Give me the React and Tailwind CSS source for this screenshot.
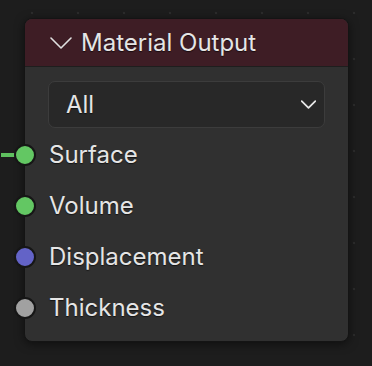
// Blender-style "Material Output" shader node
import React from 'react'

const sockets = [
  { name: 'Surface', color: 'bg-[#63c763]', linked: true },
  { name: 'Volume', color: 'bg-[#63c763]' },
  { name: 'Displacement', color: 'bg-[#6363c7]' },
  { name: 'Thickness', color: 'bg-[#a1a1a1]' },
]

function Chevron({ className, stroke = 1.6 }) {
  return (
    <svg viewBox="0 0 22 12" className={className} fill="none">
      <path d="M1 1 L11 11 L21 1" stroke="currentColor" strokeWidth={stroke} strokeLinecap="round" strokeLinejoin="round" />
    </svg>
  )
}

export default function App() {
  return (
    <div
      className="w-[372px] h-[366px] overflow-hidden bg-[#1d1d1d] bg-[radial-gradient(circle,#2c2c2c_1px,transparent_1.6px)] bg-[length:46px_46px] bg-[position:9px_-10px] pt-[18px] pl-[24px] text-[#e5e5e5]"
      style={{ fontFamily: 'Inter, "Noto Sans", sans-serif' }}
    >
      <div className="relative w-[325px] h-[324px] rounded-[8px] bg-[#303030] border border-[#141414] shadow-[0_2px_10px_rgba(0,0,0,0.5)]">
        {/* Header */}
        <div className="h-[48px] rounded-t-[7px] bg-[#3e1d25] border-b border-[#1e1e1e] flex items-center pl-[25px] gap-[9px]">
          <Chevron className="w-[22px] h-[12px] text-[#e0e0e0]" />
          <span className="text-[24px] leading-none [text-shadow:0_1px_1px_rgba(0,0,0,0.6)]">Material Output</span>
        </div>

        {/* Body */}
        <div className="pt-[14px] px-[23px]">
          <div className="h-[47px] rounded-[7px] bg-[#282828] border border-[#3c3c3c] flex items-center justify-between pl-[17px] pr-[8px]">
            <span className="text-[24px] leading-none [text-shadow:0_1px_1px_rgba(0,0,0,0.6)]">All</span>
            <Chevron className="w-[15px] h-[9px] text-[#e8e8e8]" stroke={2.6} />
          </div>
        </div>

        <div className="pt-[1px]">
          {sockets.map(s => (
            <div key={s.name} className="relative h-[51px] flex items-center pl-[24px]">
              {s.linked && (
                <div className="absolute left-[-24px] top-1/2 -translate-y-1/2 w-[16px] h-[4px] bg-[#5fc05f]" />
              )}
              <div className={`absolute left-[-11px] top-1/2 -translate-y-1/2 w-[22px] h-[22px] rounded-full border-[2px] border-[#161616] ${s.color}`} />
              <span className="text-[24px] leading-none [text-shadow:0_1px_1px_rgba(0,0,0,0.6)]">{s.name}</span>
            </div>
          ))}
        </div>
      </div>
    </div>
  )
}
